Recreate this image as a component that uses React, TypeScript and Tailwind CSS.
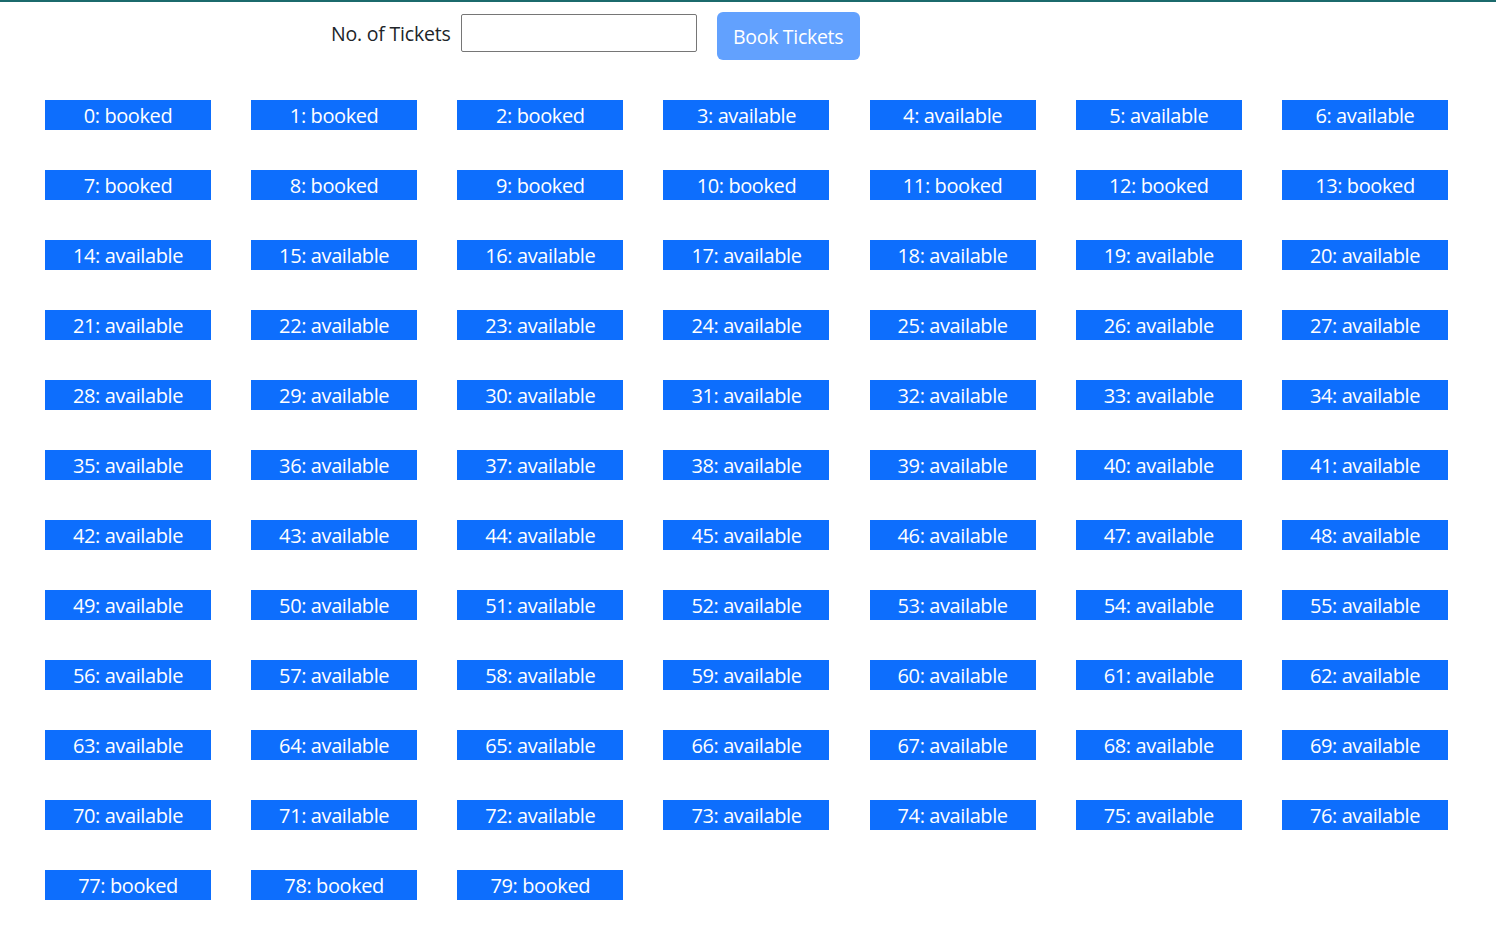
import React from "react";

const bookedSeats = [0, 1, 2, 7, 8, 9, 10, 11, 12, 13, 77, 78, 79];

const seats = Array.from({ length: 80 }, (_, i) => ({
  id: i,
  status: bookedSeats.includes(i) ? "booked" : "available",
}));

export default function App() {
  return (
    <main
      className="min-h-screen bg-white border-t-2 border-[#1b6a6c] text-[#212529]"
      style={{ fontFamily: '"Open Sans", "Noto Sans", sans-serif' }}
    >
      {/* Booking form */}
      <div className="flex items-center pt-[10px] pl-[331px]">
        <label className="text-[19.5px] leading-none mr-[10px] tracking-[-0.2px] mt-[-4px]">No. of Tickets</label>
        <input
          type="number"
          className="w-[236px] h-[38px] border border-[#767676] rounded-[2px] mr-[20px] mt-[-6px]"
        />
        <button
          disabled
          className="w-[143px] h-[48px] rounded-[6px] bg-[#62a1fe] text-white text-[19.5px] tracking-[-0.3px] pt-[2px]"
        >
          Book Tickets
        </button>
      </div>

      {/* Seats */}
      <div className="grid grid-cols-[repeat(7,166px)] gap-x-[40.17px] gap-y-[40px] pl-[45px] pt-[40px]">
        {seats.map((seat) => (
          <button
            key={seat.id}
            className="h-[30px] bg-[#0d6efd] text-white text-[20px] leading-[30px] pt-[1px] tracking-[-0.4px]"
          >
            {seat.id}: {seat.status}
          </button>
        ))}
      </div>
    </main>
  );
}
